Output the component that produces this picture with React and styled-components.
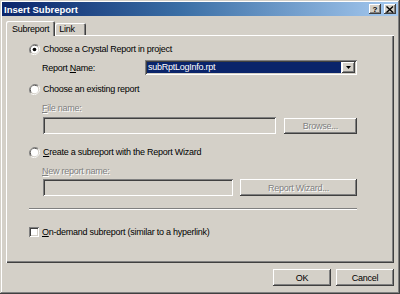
import React from "react";
import styled, { createGlobalStyle, css } from "styled-components";

const GlobalStyle = createGlobalStyle`
  html, body {
    margin: 0;
    padding: 0;
    background: #d4d0c8;
  }
  body {
    font-family: "Liberation Sans", Arial, sans-serif;
  }
`;

const raised = css`
  box-shadow: inset -1px -1px #404040, inset 1px 1px #ffffff,
    inset -2px -2px #808080, inset 2px 2px #d4d0c8;
`;

const sunken = css`
  box-shadow: inset 1px 1px #808080, inset -1px -1px #ffffff,
    inset 2px 2px #404040, inset -2px -2px #d4d0c8;
`;

const Window = styled.div`
  width: 400px;
  height: 294px;
  box-sizing: border-box;
  padding: 2px;
  display: flex;
  flex-direction: column;
  background: #d4d0c8;
  color: #000;
  font-size: 9px;
  letter-spacing: -0.25px;
  box-shadow: inset -1px -1px #404040, inset 1px 1px #d4d0c8,
    inset -2px -2px #808080, inset 2px 2px #ffffff;
`;

const TitleBar = styled.div`
  height: 14px;
  display: flex;
  align-items: center;
  justify-content: space-between;
  padding: 0 2px 0 2px;
  background: linear-gradient(to right, #0a246a 0%, #3a6ea5 45%, #a6caf0 100%);
`;

const Title = styled.span`
  color: #fff;
  font-weight: bold;
  font-size: 9.5px;
  letter-spacing: 0;
`;

const TitleButtons = styled.div`
  display: flex;
  gap: 3px;
`;

const CaptionButton = styled.div`
  width: 12px;
  height: 10px;
  background: #d4d0c8;
  display: flex;
  align-items: center;
  justify-content: center;
  font-weight: bold;
  font-size: 8px;
  letter-spacing: 0;
  ${raised};
`;

const Body = styled.div`
  flex: 1;
  display: flex;
  flex-direction: column;
  padding: 5px 4px 0 4px;
`;

const TabRow = styled.div`
  height: 14px;
  display: flex;
  align-items: flex-end;
`;

const Tab = styled.div`
  height: ${(p) => (p.$active ? 15 : 12)}px;
  min-width: ${(p) => (p.$active ? 0 : 31)}px;
  box-sizing: border-box;
  padding: 0 ${(p) => (p.$active ? 6 : 4)}px;
  display: flex;
  align-items: center;
  background: #d4d0c8;
  border-radius: 2px 2px 0 0;
  box-shadow: inset 1px 1px #ffffff, inset -1px 0 #404040,
    inset -2px 0 #808080;
  ${(p) =>
    p.$active &&
    css`
      margin-bottom: -1px;
      position: relative;
      z-index: 1;
    `}
`;

const Panel = styled.div`
  height: 228px;
  box-sizing: border-box;
  padding: 8px 0 0 23px;
  display: flex;
  flex-direction: column;
  box-shadow: inset 1px 1px #ffffff, inset -1px -1px #404040,
    inset -2px -2px #808080;
`;

const OptionRow = styled.label`
  height: 12px;
  display: flex;
  align-items: center;
  gap: 3px;
  margin-top: ${(p) => p.$top || 0}px;
`;

const FieldRow = styled.div`
  display: flex;
  align-items: center;
  gap: ${(p) => p.$gap || 0}px;
  margin-top: ${(p) => p.$top || 0}px;
  margin-left: ${(p) => p.$indent || 13}px;
`;

const Caption = styled.span`
  height: 12px;
  line-height: 12px;
  width: ${(p) => (p.$width ? `${p.$width}px` : "auto")};
  color: ${(p) => (p.$disabled ? "#808080" : "#000")};
  text-shadow: ${(p) => (p.$disabled ? "1px 1px #ffffff" : "none")};
`;

const Combo = styled.div`
  width: 212px;
  height: 15px;
  box-sizing: border-box;
  padding: 2px;
  display: flex;
  background: #fff;
  ${sunken};
`;

const ComboValue = styled.div`
  flex: 1;
  background: #0a246a;
  color: #fff;
  padding-left: 1px;
  line-height: 11px;
  margin-right: 1px;
`;

const DropButton = styled.div`
  width: 13px;
  display: flex;
  align-items: center;
  justify-content: center;
  background: #d4d0c8;
  ${raised};
`;

const TextBox = styled.div`
  width: ${(p) => p.$width}px;
  height: 17px;
  box-sizing: border-box;
  background: ${(p) => (p.$disabled ? "#d4d0c8" : "#fff")};
  ${sunken};
`;

const Button = styled.div`
  width: ${(p) => p.$width}px;
  height: ${(p) => p.$height || 17}px;
  box-sizing: border-box;
  display: flex;
  align-items: center;
  justify-content: center;
  background: #d4d0c8;
  color: ${(p) => (p.$disabled ? "#808080" : "#000")};
  text-shadow: ${(p) => (p.$disabled ? "1px 1px #ffffff" : "none")};
  ${raised};
`;

const Separator = styled.div`
  width: 328px;
  height: 2px;
  box-sizing: border-box;
  margin-top: 12px;
  border-top: 1px solid #808080;
  border-bottom: 1px solid #ffffff;
`;

const Footer = styled.div`
  display: flex;
  justify-content: flex-end;
  gap: 5px;
  padding-top: 6px;
`;

const Key = styled.u`
  text-decoration: underline;
`;

const Radio = ({ checked }) => (
  <svg width="11" height="11" viewBox="0 0 12 12">
    <path d="M10.2 1.8 A6 6 0 0 0 1.8 10.2" fill="none" stroke="#808080" strokeWidth="1" />
    <path d="M10.2 1.8 A6 6 0 0 1 1.8 10.2" fill="none" stroke="#ffffff" strokeWidth="1" />
    <path d="M9.5 2.5 A5 5 0 0 0 2.5 9.5" fill="none" stroke="#404040" strokeWidth="1" />
    <path d="M9.5 2.5 A5 5 0 0 1 2.5 9.5" fill="none" stroke="#d4d0c8" strokeWidth="1" />
    <circle cx="6" cy="6" r="4" fill="#ffffff" />
    {checked && <circle cx="6" cy="6" r="2" fill="#000" />}
  </svg>
);

const CheckBox = styled.div`
  width: 10px;
  height: 10px;
  box-sizing: border-box;
  background: #fff;
  ${sunken};
`;

const CloseGlyph = () => (
  <svg width="8" height="7" viewBox="0 0 8 7">
    <path d="M0.5 0.5 L7 6.5 M7 0.5 L0.5 6.5" stroke="#000" strokeWidth="1.4" />
  </svg>
);

const Arrow = () => (
  <svg width="5" height="3" viewBox="0 0 5 3">
    <path d="M0 0 H5 L2.5 3 Z" fill="#000" />
  </svg>
);

export default function App() {
  return (
    <>
      <GlobalStyle />
      <Window>
        <TitleBar>
          <Title>Insert Subreport</Title>
          <TitleButtons>
            <CaptionButton>?</CaptionButton>
            <CaptionButton>
              <CloseGlyph />
            </CaptionButton>
          </TitleButtons>
        </TitleBar>
        <Body>
          <TabRow>
            <Tab $active>Subreport</Tab>
            <Tab>Link</Tab>
          </TabRow>
          <Panel>
            <OptionRow>
              <Radio checked />
              <Caption>Choose a Crystal Report in project</Caption>
            </OptionRow>
            <FieldRow $top={5}>
              <Caption $width={103}>
                Report <Key>N</Key>ame:
              </Caption>
              <Combo>
                <ComboValue>subRptLogInfo.rpt</ComboValue>
                <DropButton>
                  <Arrow />
                </DropButton>
              </Combo>
            </FieldRow>
            <OptionRow $top={8}>
              <Radio />
              <Caption>Choose an existing report</Caption>
            </OptionRow>
            <FieldRow $top={7}>
              <Caption $disabled>
                <Key>F</Key>ile name:
              </Caption>
            </FieldRow>
            <FieldRow $top={3} $indent={14} $gap={8}>
              <TextBox $width={233} $disabled />
              <Button $width={73} $height={16} $disabled>
                Browse...
              </Button>
            </FieldRow>
            <OptionRow $top={12}>
              <Radio />
              <Caption>
                <Key>C</Key>reate a subreport with the Report Wizard
              </Caption>
            </OptionRow>
            <FieldRow $top={7}>
              <Caption $disabled>
                <Key>N</Key>ew report name:
              </Caption>
            </FieldRow>
            <FieldRow $top={2} $indent={14} $gap={7}>
              <TextBox $width={190} $disabled />
              <Button $width={117} $disabled>
                Report Wizard...
              </Button>
            </FieldRow>
            <Separator />
            <OptionRow $top={16}>
              <CheckBox />
              <Caption>
                <Key>O</Key>n-demand subreport (similar to a hyperlink)
              </Caption>
            </OptionRow>
          </Panel>
          <Footer>
            <Button $width={58}>OK</Button>
            <Button $width={58}>Cancel</Button>
          </Footer>
        </Body>
      </Window>
    </>
  );
}
